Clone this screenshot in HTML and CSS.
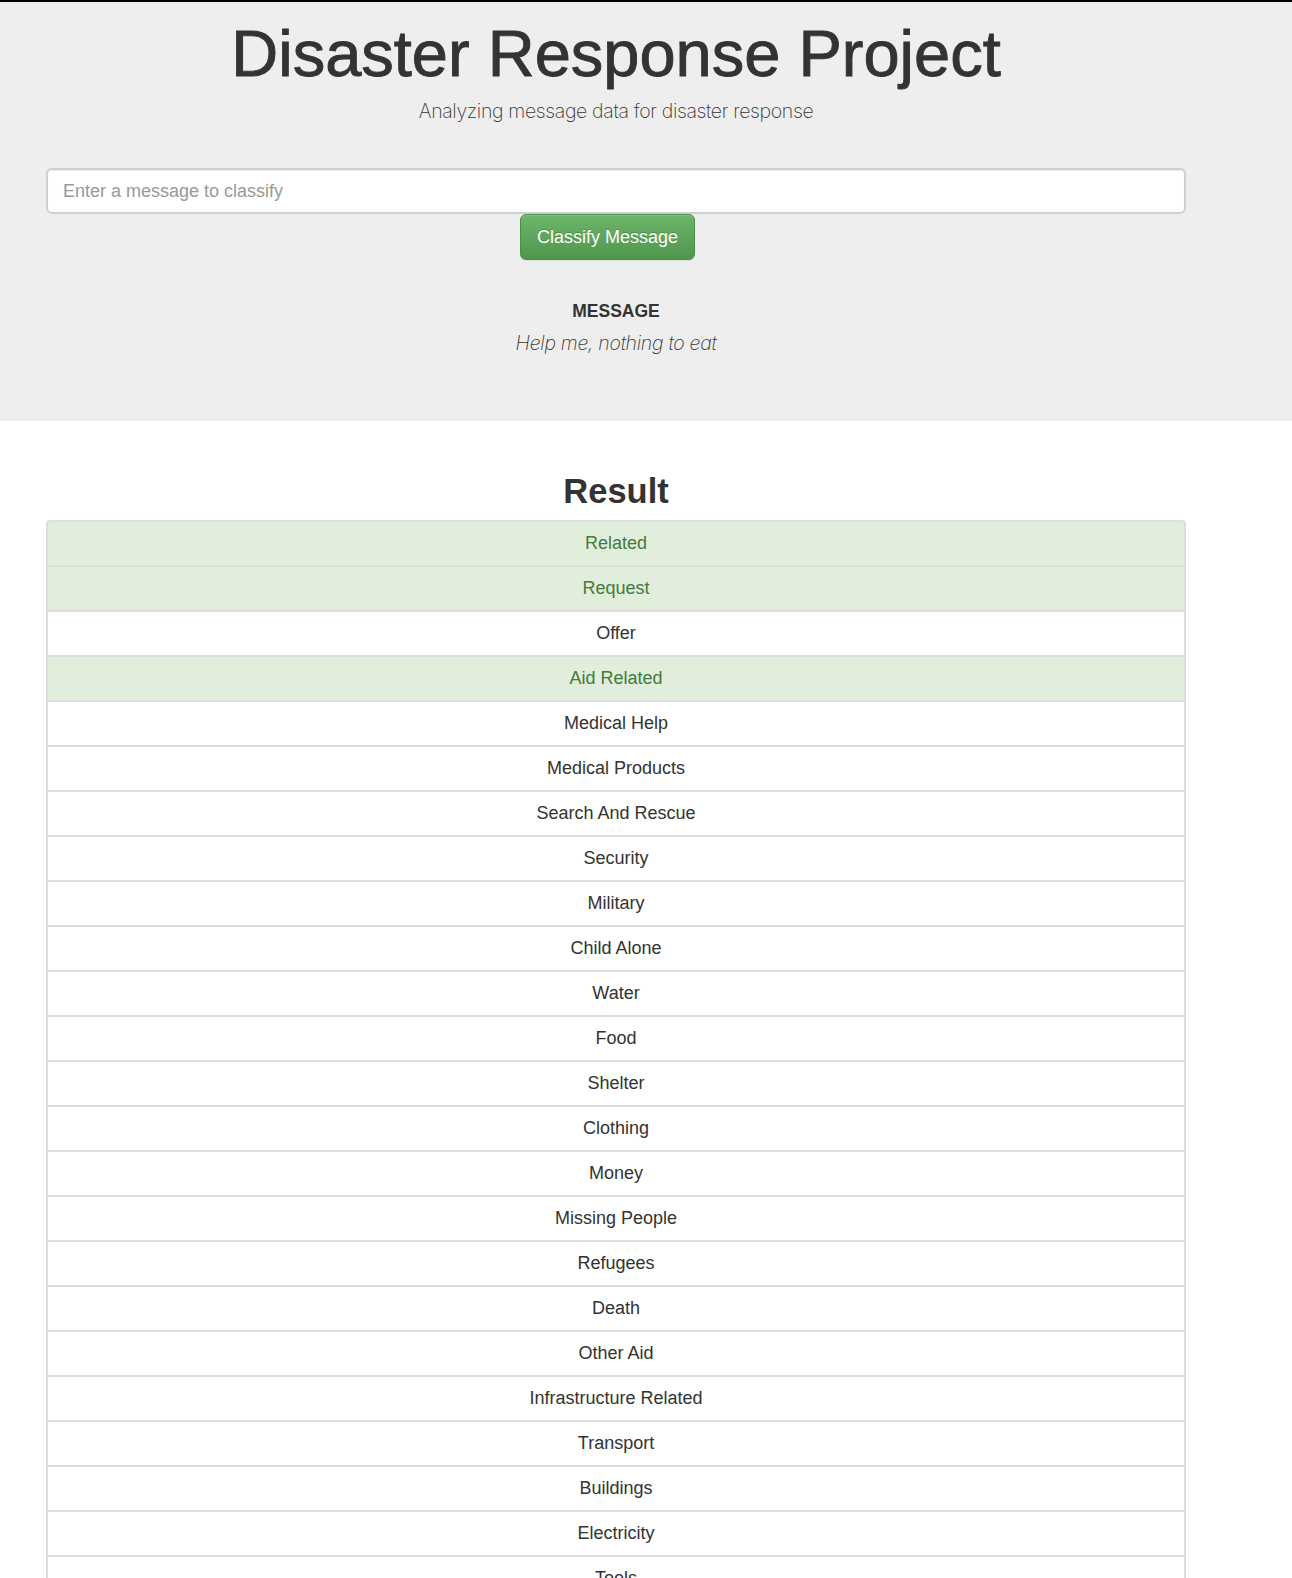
FILE: index.html
```html
<!DOCTYPE html>
<html lang="en">
<head>
<meta charset="utf-8">
<title>Disasters</title>
<link rel="stylesheet" href="styles.css">
</head>
<body>
<div class="topbar"></div>
<div class="jumbotron">
  <div class="container">
    <h1 class="title">Disaster Response Project</h1>
    <p class="subtitle">Analyzing message data for disaster response</p>
    <form class="classify-form">
      <input class="msg-input" type="text" name="query" placeholder="Enter a message to classify">
      <div class="btn-row">
        <button type="button" class="btn-success">Classify Message</button>
      </div>
    </form>
    <div class="message-block">
      <h4 class="message-label">MESSAGE</h4>
      <p class="message-text">Help me, nothing to eat</p>
    </div>
  </div>
</div>
<div class="container">
  <h2 class="result-title">Result</h2>
  <ul class="list-group">
    <li class="list-item on">Related</li>
    <li class="list-item on">Request</li>
    <li class="list-item">Offer</li>
    <li class="list-item on">Aid Related</li>
    <li class="list-item">Medical Help</li>
    <li class="list-item">Medical Products</li>
    <li class="list-item">Search And Rescue</li>
    <li class="list-item">Security</li>
    <li class="list-item">Military</li>
    <li class="list-item">Child Alone</li>
    <li class="list-item">Water</li>
    <li class="list-item">Food</li>
    <li class="list-item">Shelter</li>
    <li class="list-item">Clothing</li>
    <li class="list-item">Money</li>
    <li class="list-item">Missing People</li>
    <li class="list-item">Refugees</li>
    <li class="list-item">Death</li>
    <li class="list-item">Other Aid</li>
    <li class="list-item">Infrastructure Related</li>
    <li class="list-item">Transport</li>
    <li class="list-item">Buildings</li>
    <li class="list-item">Electricity</li>
    <li class="list-item">Tools</li>
    <li class="list-item">Hospitals</li>
    <li class="list-item">Shops</li>
    <li class="list-item">Aid Centers</li>
    <li class="list-item">Other Infrastructure</li>
    <li class="list-item">Weather Related</li>
    <li class="list-item">Floods</li>
    <li class="list-item">Storm</li>
    <li class="list-item">Fire</li>
    <li class="list-item">Earthquake</li>
    <li class="list-item">Cold</li>
    <li class="list-item">Other Weather</li>
    <li class="list-item">Direct Report</li>
  </ul>
</div>
</body>
</html>
```

FILE: styles.css
```css
html, body {
  margin: 0;
  padding: 0;
  background: #fff;
  color: #333;
  font-family: "Liberation Sans", Arial, sans-serif;
}

.topbar {
  height: 2px;
  background: #000;
}

.jumbotron {
  background: #eeeeee;
  padding: 16px 0 64px;
}

.container {
  width: 1140px;
  margin-left: 46px;
}

.title {
  margin: 0;
  font-size: 65px;
  line-height: 72px;
  font-weight: normal;
  text-align: center;
  color: #333;
  -webkit-text-stroke: 0.9px #333;
}

.subtitle {
  margin: 7px 0 0;
  font-family: Inter, "Liberation Sans", sans-serif;
  font-weight: 200;
  font-size: 19.5px;
  line-height: 28px;
  letter-spacing: -0.35px;
  text-align: center;
  color: #333;
}

.classify-form {
  margin: 43px 0 0;
}

.msg-input {
  display: block;
  box-sizing: border-box;
  width: 1140px;
  height: 46px;
  margin: 0;
  padding: 10px 15px;
  border: 2px solid #cfcfcf;
  border-radius: 6px;
  background: #fff;
  box-shadow: inset 0 1px 1px rgba(0,0,0,.075);
  font-family: "Liberation Sans", Arial, sans-serif;
  font-size: 18px;
  color: #555;
  outline: none;
}

.msg-input::placeholder {
  color: #999;
}

.btn-row {
  display: flex;
  padding-left: 474px;
}

.btn-success {
  box-sizing: border-box;
  width: 175px;
  height: 46px;
  padding: 10px 16px;
  border: 1px solid #4a8f47;
  border-radius: 6px;
  background: linear-gradient(to bottom, #6db56a 0, #4f974c 100%);
  box-shadow: inset 0 1px 0 rgba(255,255,255,.15), 0 1px 1px rgba(0,0,0,.075);
  color: #fff;
  text-shadow: 0 -1px 0 rgba(0,0,0,.2);
  font-family: "Liberation Sans", Arial, sans-serif;
  font-size: 18px;
  line-height: 24px;
  white-space: nowrap;
}

.message-block {
  margin-top: 41px;
  text-align: center;
}

.message-label {
  margin: 0;
  font-size: 17.5px;
  line-height: 20px;
  font-weight: bold;
  color: #333;
}

.message-text {
  margin: 8px 0 0;
  font-family: Inter, "Liberation Sans", sans-serif;
  font-weight: 200;
  font-style: italic;
  font-size: 19.5px;
  line-height: 28px;
  letter-spacing: -0.3px;
  color: #333;
}

.result-title {
  margin: 50px 0 9px;
  font-size: 34.5px;
  line-height: 40px;
  font-weight: bold;
  text-align: center;
  color: #333;
}

.list-group {
  list-style: none;
  margin: 0;
  padding: 0;
}

.list-item {
  display: block;
  padding: 11px 15px;
  margin-bottom: -2px;
  border: 2px solid #dddddd;
  background: #fff;
  font-size: 18px;
  line-height: 21px;
  text-align: center;
  color: #333;
}

.list-item:first-child {
  border-top-left-radius: 4px;
  border-top-right-radius: 4px;
}

.list-item.on {
  background: #e1eedb;
  color: #437a3e;
}
```
